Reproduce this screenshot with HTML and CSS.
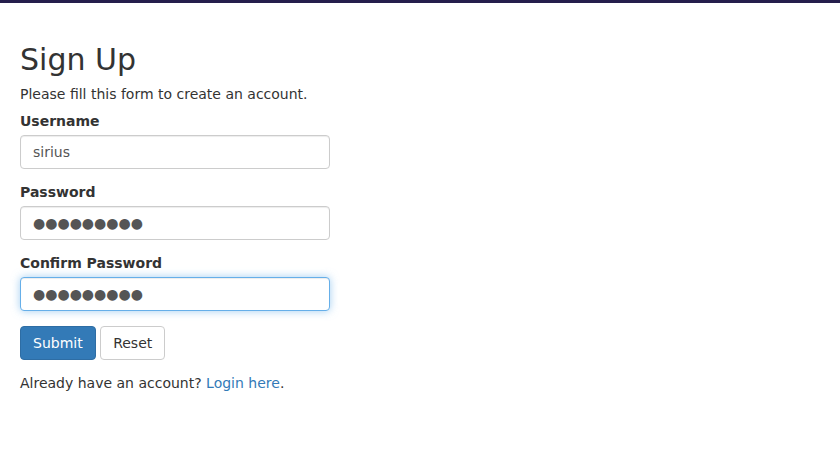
FILE: index.html
```html
<!DOCTYPE html>
<html>
<head>
<meta charset="utf-8">
<title>Sign Up</title>
<link rel="stylesheet" href="styles.css">
</head>
<body>
<div class="topbar"></div>
<div class="wrapper">
  <h2 class="title">Sign Up</h2>
  <p class="intro">Please fill this form to create an account.</p>
  <form class="form">
    <div class="form-group">
      <label class="label">Username</label>
      <input class="control" type="text" value="sirius">
    </div>
    <div class="form-group">
      <label class="label">Password</label>
      <input class="control masked" type="text" value="●●●●●●●●●">
    </div>
    <div class="form-group">
      <label class="label">Confirm Password</label>
      <input class="control masked focused" type="text" value="●●●●●●●●●">
    </div>
    <div class="form-group">
      <button class="btn btn-primary" type="button">Submit</button>
      <button class="btn btn-default" type="button">Reset</button>
    </div>
    <p class="intro">Already have an account? <a class="link" href="#">Login here</a>.</p>
  </form>
</div>
</body>
</html>
```
FILE: styles.css
```css
html, body {
  margin: 0;
  padding: 0;
  background: #fff;
}
body {
  font-family: "DejaVu Sans", sans-serif;
  font-size: 14px;
  line-height: 17px;
  color: #333;
}
.topbar {
  height: 3px;
  background: #251e4c;
}
.wrapper {
  width: 310px;
  padding: 20px;
}
.title {
  font-size: 30px;
  font-weight: 500;
  line-height: 1.1;
  margin: 20px 0 10px;
}
.intro {
  margin: 0 0 10px;
}
.form {
  margin: 0;
}
.form-group {
  margin-bottom: 15px;
}
.label {
  display: inline-block;
  max-width: 100%;
  margin-bottom: 5px;
  font-weight: bold;
}
.control {
  display: block;
  box-sizing: border-box;
  width: 100%;
  height: 34px;
  padding: 6px 12px;
  font-family: "DejaVu Sans", sans-serif;
  font-size: 14px;
  line-height: 20px;
  color: #555;
  background: #fff;
  border: 1px solid #ccc;
  border-radius: 4px;
  box-shadow: inset 0 1px 1px rgba(0,0,0,.075);
  outline: none;
}
.masked {
  font-size: 14px;
}
.focused {
  border-color: #66afe9;
  box-shadow: inset 0 1px 1px rgba(0,0,0,.075), 0 0 8px rgba(102,175,233,.6);
}
.btn {
  display: inline-block;
  padding: 6px 12px;
  margin: 0;
  font-family: "DejaVu Sans", sans-serif;
  font-size: 14px;
  line-height: 20px;
  border: 1px solid transparent;
  border-radius: 4px;
  cursor: pointer;
  vertical-align: middle;
}
.btn-primary {
  color: #fff;
  background: #337ab7;
  border-color: #2e6da4;
}
.btn-default {
  color: #333;
  background: #fff;
  border-color: #ccc;
}
.link {
  color: #337ab7;
  text-decoration: none;
}
```
